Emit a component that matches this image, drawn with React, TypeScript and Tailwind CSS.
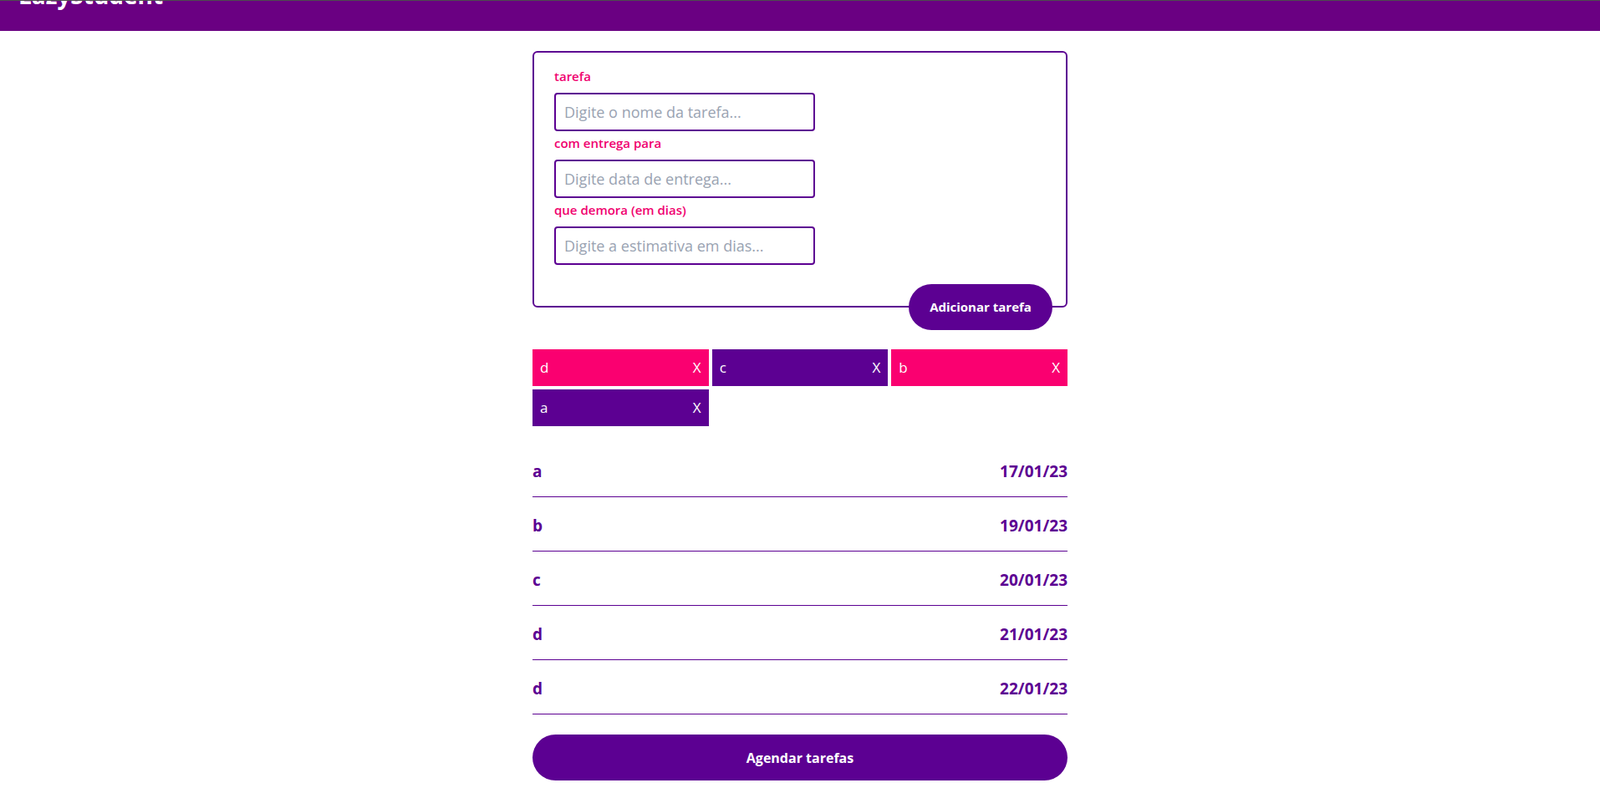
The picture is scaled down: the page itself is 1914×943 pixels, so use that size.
import React, { useState } from 'react';

type Tarefa = {
  nome: string;
  entrega: string;
};

const PURPLE = 'bg-[#5c0092]';

const tarefasIniciais: Tarefa[] = [
  { nome: 'd', entrega: '' },
  { nome: 'c', entrega: '' },
  { nome: 'b', entrega: '' },
  { nome: 'a', entrega: '' },
];

const agenda = [
  { nome: 'a', data: '17/01/23' },
  { nome: 'b', data: '19/01/23' },
  { nome: 'c', data: '20/01/23' },
  { nome: 'd', data: '21/01/23' },
  { nome: 'd', data: '22/01/23' },
];

const App: React.FC = () => {
  const [tarefas, setTarefas] = useState<Tarefa[]>(tarefasIniciais);
  const [nome, setNome] = useState('');
  const [entrega, setEntrega] = useState('');
  const [dias, setDias] = useState('');

  const adicionar = () => {
    if (!nome.trim()) return;
    setTarefas([{ nome, entrega }, ...tarefas]);
    setNome('');
    setEntrega('');
    setDias('');
  };

  const remover = (index: number) => {
    setTarefas(tarefas.filter((_, i) => i !== index));
  };

  return (
    <div className="min-w-[1914px] min-h-[980px] bg-white font-['Open_Sans',sans-serif]">
      <header className="h-[37px] overflow-hidden border-t border-[#4d4d4d] bg-[#6a0082] pl-[22px]">
        <h1 className="-mt-[21px] text-[28px] font-bold leading-none text-white">LazyStudent</h1>
      </header>

      <main className="mx-auto w-[640px] pt-6 pb-10">
        <div className="relative rounded-[6px] border-2 border-[#5c0092] px-6 pt-[16px] pb-[49px]">
          <label className="mb-2 block text-[15px] font-semibold leading-6 text-[#f0006e]">tarefa</label>
          <input
            value={nome}
            onChange={(e) => setNome(e.target.value)}
            placeholder="Digite o nome da tarefa..."
            className="block h-[46px] w-[312px] rounded-[4px] border-2 border-[#5c0092] px-2.5 text-[18px] text-gray-700 outline-none placeholder:text-[#9aa3b2]"
          />
          <label className="mt-0.5 mb-2 block text-[15px] font-semibold leading-6 text-[#f0006e]">com entrega para</label>
          <input
            value={entrega}
            onChange={(e) => setEntrega(e.target.value)}
            placeholder="Digite data de entrega..."
            className="block h-[46px] w-[312px] rounded-[4px] border-2 border-[#5c0092] px-2.5 text-[18px] text-gray-700 outline-none placeholder:text-[#9aa3b2]"
          />
          <label className="mt-0.5 mb-2 block text-[15px] font-semibold leading-6 text-[#f0006e]">que demora (em dias)</label>
          <input
            value={dias}
            onChange={(e) => setDias(e.target.value)}
            placeholder="Digite a estimativa em dias..."
            className="block h-[46px] w-[312px] rounded-[4px] border-2 border-[#5c0092] px-2.5 text-[18px] text-gray-700 outline-none placeholder:text-[#9aa3b2]"
          />
          <button
            onClick={adicionar}
            className={`absolute right-4 -bottom-[29px] h-[55px] w-[172px] rounded-full ${PURPLE} text-[15px] font-bold text-white`}
          >
            Adicionar tarefa
          </button>
        </div>

        <div className="mt-[50px] grid grid-cols-3 gap-1">
          {tarefas.map((t, i) => (
            <div
              key={i}
              className={`flex h-[44px] items-center justify-between px-[9px] text-[17px] text-white ${i % 2 === 0 ? 'bg-[#fa0070]' : PURPLE}`}
            >
              <span>{t.nome}</span>
              <button onClick={() => remover(i)}>X</button>
            </div>
          ))}
        </div>

        <ul className="mt-5">
          {agenda.map((a, i) => (
            <li
              key={i}
              className="flex items-center justify-between border-b border-[#5c0092] pt-5 pb-4 text-[19px] leading-7 font-bold text-[#5c0092]"
            >
              <span>{a.nome}</span>
              <span>{a.data}</span>
            </li>
          ))}
        </ul>

        <button className={`mt-6 h-[55px] w-full rounded-full ${PURPLE} text-[16px] font-bold text-white`}>
          Agendar tarefas
        </button>
      </main>
    </div>
  );
};

export default App;
